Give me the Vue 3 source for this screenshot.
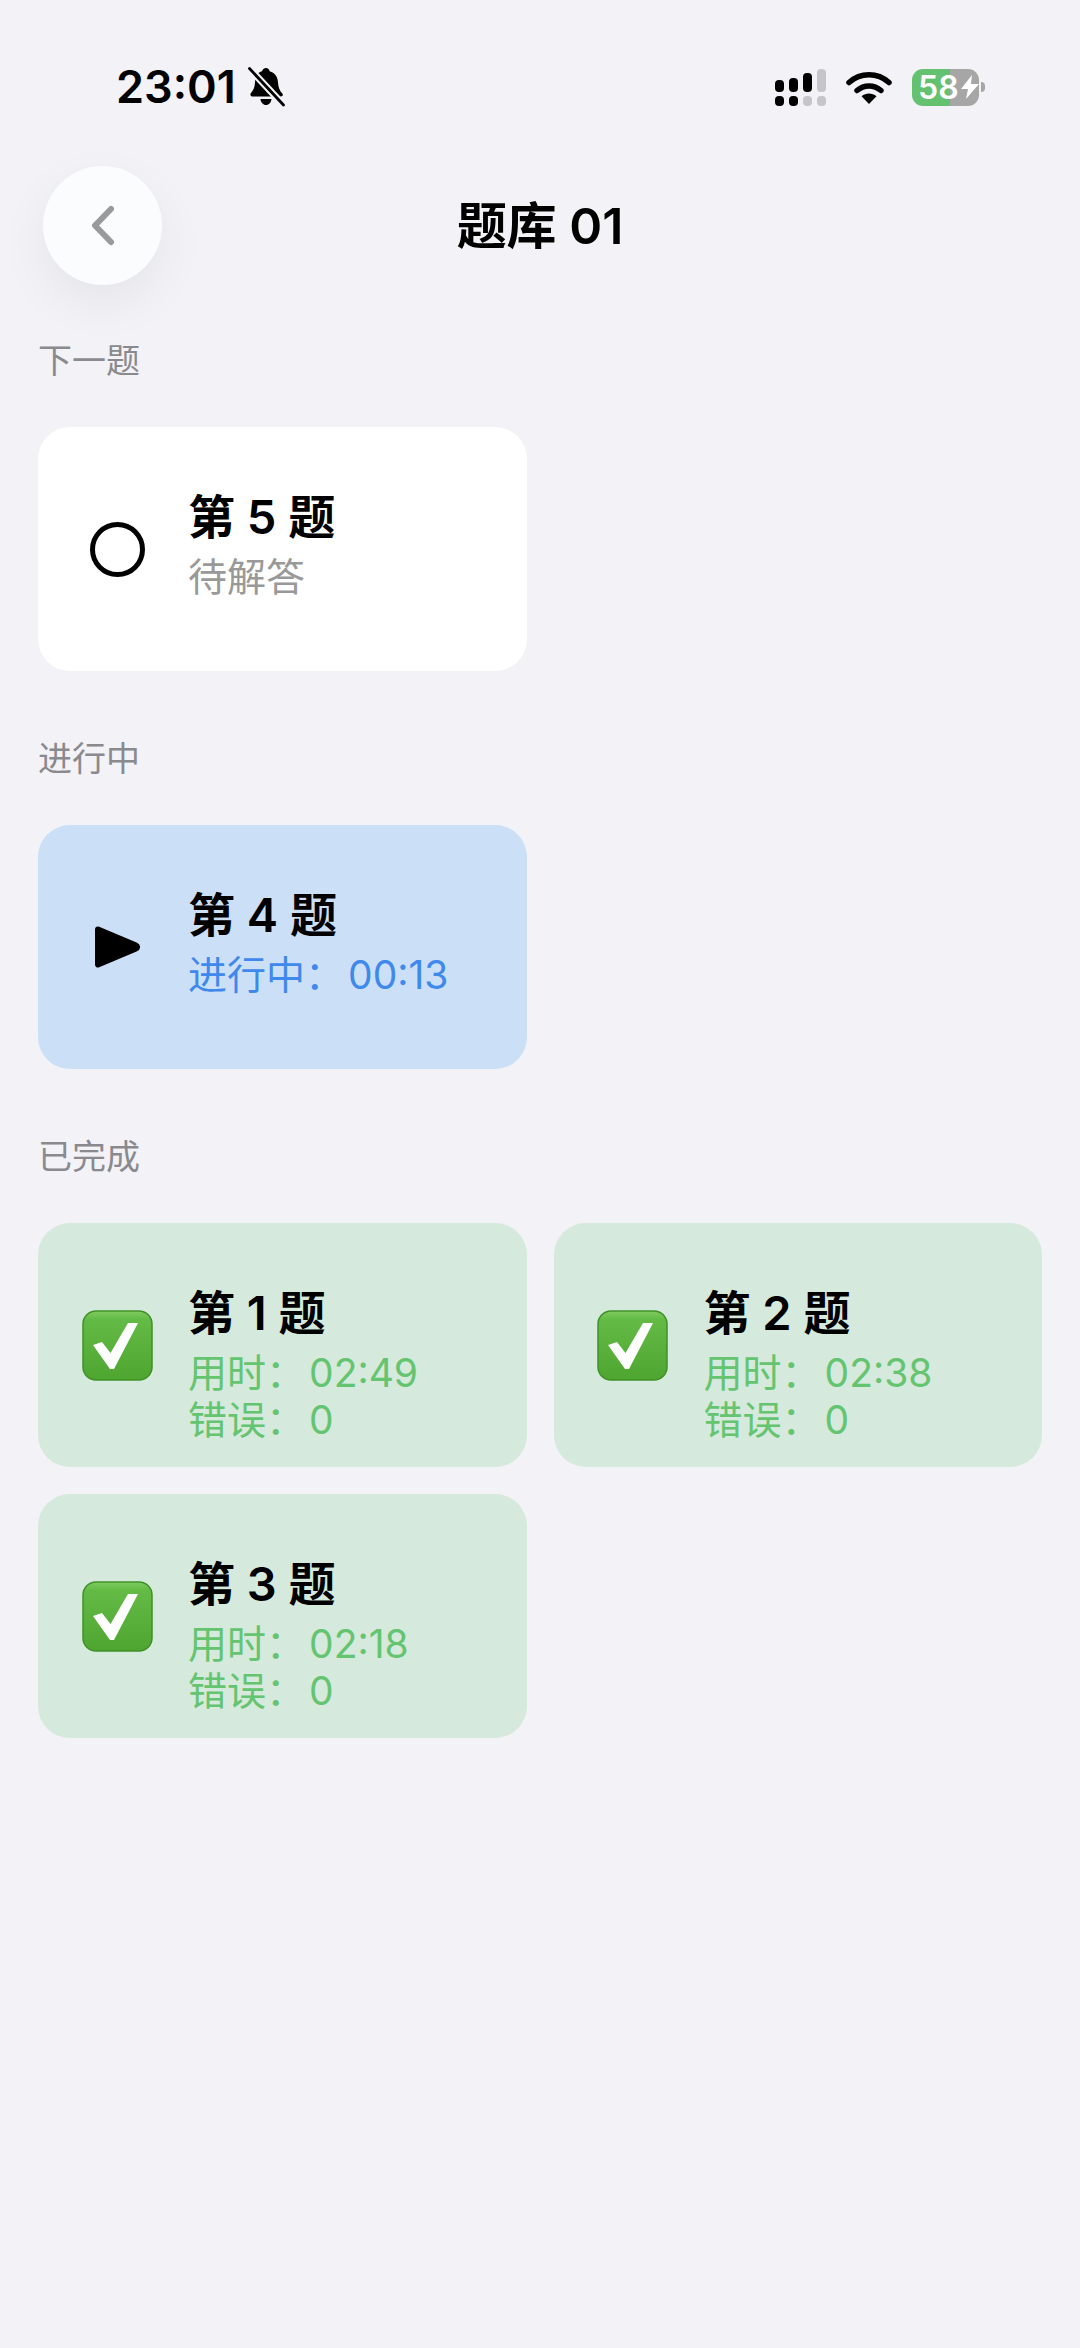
<template>
  <div class="page">
    <div class="status-bar">
      <div class="status-left">
        <span class="time">23:01</span>
        <svg class="bell" width="37" height="40" viewBox="0 0 37 40">
          <path d="M18 1c2 0 3.400 1.500 3.600 3.300 5.400 1.400 8 5.600 8.400 11 .3 5 1.400 8.200 4.300 11.200 1 1.100.5 3-1.400 3H5c-2.400 0-3.400-2-2-3.600 2.700-2.900 3.800-6 4-10.600.3-6 2.800-10 7-11C14.500 2.500 16 1 18 1z" fill="#000" />
          <path d="M12.500 32h11c-.3 3.600-2.600 6-5.500 6s-5.200-2.400-5.500-6z" fill="#000" />
          <path d="M1.500 1.500 35.500 38" stroke="#f2f2f7" stroke-width="7" fill="none" />
          <path d="M1.500 1.500 35.500 38" stroke="#000" stroke-width="2.800" stroke-linecap="round" fill="none" />
        </svg>
      </div>
      <div class="status-right">
        <div class="signal">
          <div v-for="(col, i) in signalCols" :key="i" class="signal-col">
            <span class="bar" :class="{ off: col.topOff }" :style="{ height: col.height + 'px' }"></span>
            <span class="dot" :class="{ off: col.dotOff }"></span>
          </div>
        </div>
        <svg class="wifi" width="46" height="33" viewBox="0 0 46 33">
          <path d="M3 11.500C14.500 1.200 31.500 1.200 43 11.500" stroke="#000" stroke-width="5.500" fill="none" stroke-linecap="round" />
          <path d="M11 19.500c7-6 17-6 24 0" stroke="#000" stroke-width="5.500" fill="none" stroke-linecap="round" />
          <path d="M15.500 25.200c4.600-3.700 10.400-3.700 15 0L23 33z" fill="#000" />
        </svg>
        <div class="battery">
          <div class="battery-body">
            <span class="battery-num">58</span>
            <svg class="bolt" width="18" height="24" viewBox="0 0 18 24">
              <path d="M11 0 0 14h7l-2 10L18 9h-8z" fill="#fff" />
            </svg>
          </div>
          <span class="battery-nub"></span>
        </div>
      </div>
    </div>

    <header class="header">
      <button class="back">
        <svg width="24" height="42" viewBox="0 0 24 42">
          <path d="M20 4 4 20.500 20 37" stroke="#9a9a9c" stroke-width="6" fill="none" stroke-linecap="round" stroke-linejoin="round" />
        </svg>
      </button>
      <h1 class="title">题库 01</h1>
      <span></span>
    </header>

    <section v-for="section in sections" :key="section.label" class="section">
      <div class="section-label">{{ section.label }}</div>
      <div class="grid">
        <div v-for="item in section.items" :key="item.id" class="card" :class="section.kind">
          <div class="card-icon">
            <span v-if="section.kind === 'todo'" class="ring"></span>
            <svg v-else-if="section.kind === 'doing'" width="46" height="44" viewBox="0 0 46 44">
              <path d="M4 4.500 42 20.500a1.600 1.600 0 0 1 0 3L4 39.500z" fill="#000" stroke="#000" stroke-width="6" stroke-linejoin="round" />
            </svg>
            <svg v-else width="71" height="71" viewBox="0 0 71 71">
              <defs>
                <linearGradient :id="'check' + item.id" x1="0" y1="0" x2="0" y2="1">
                  <stop offset="0" stop-color="#7fcb5f" />
                  <stop offset="0.12" stop-color="#63bb45" />
                  <stop offset="1" stop-color="#4ea52f" />
                </linearGradient>
              </defs>
              <rect x="1" y="1" width="69" height="69" rx="13" :fill="'url(#check' + item.id + ')'" stroke="#3f9128" stroke-width="1.500" />
              <path d="M11 35 20 32 28.500 43 46 13 56 13 32 59 28 59z" fill="#fff" />
            </svg>
          </div>
          <div class="card-body">
            <div class="card-title">{{ item.title }}</div>
            <div v-for="line in item.lines" :key="line.name" class="card-line">
              {{ line.name }}<template v-if="line.value !== undefined"><span class="colon">：</span>{{ line.value }}</template>
            </div>
          </div>
        </div>
      </div>
    </section>
  </div>
</template>

<script setup>
const signalCols = [
  { height: 12 },
  { height: 14 },
  { height: 19, dotOff: true },
  { height: 23, topOff: true, dotOff: true }
]

const sections = [
  {
    label: '下一题',
    kind: 'todo',
    items: [{ id: 5, title: '第 5 题', lines: [{ name: '待解答' }] }]
  },
  {
    label: '进行中',
    kind: 'doing',
    items: [{ id: 4, title: '第 4 题', lines: [{ name: '进行中', value: '00:13' }] }]
  },
  {
    label: '已完成',
    kind: 'done',
    items: [
      { id: 1, title: '第 1 题', lines: [{ name: '用时', value: '02:49' }, { name: '错误', value: '0' }] },
      { id: 2, title: '第 2 题', lines: [{ name: '用时', value: '02:38' }, { name: '错误', value: '0' }] },
      { id: 3, title: '第 3 题', lines: [{ name: '用时', value: '02:18' }, { name: '错误', value: '0' }] }
    ]
  }
]
</script>

<style>
html,
body {
  background: #f2f2f7;
}
</style>

<style scoped>
.page {
  min-height: 2348px;
  padding: 0 38px;
  box-sizing: border-box;
  background: #f2f2f7;
  font-family: Inter, "Noto Sans CJK SC", sans-serif;
  color: #000;
}

.status-bar {
  display: flex;
  justify-content: space-between;
  align-items: center;
  height: 166px;
  padding: 8px 57px 0 78px;
  box-sizing: border-box;
}

.status-left {
  display: flex;
  align-items: center;
  gap: 12px;
}

.time {
  font-size: 45px;
  font-weight: 600;
  line-height: 56px;
}

.status-right {
  display: flex;
  align-items: center;
  gap: 20px;
}

.signal {
  display: flex;
  gap: 5px;
}

.signal-col {
  display: flex;
  flex-direction: column;
  justify-content: flex-end;
  gap: 4px;
  width: 9px;
  height: 37px;
}

.bar,
.dot {
  display: block;
  width: 9px;
  border-radius: 4px;
  background: #000;
}

.dot {
  height: 10px;
}

.bar.off,
.dot.off {
  background: #c6c6c9;
}

.battery {
  display: flex;
  align-items: center;
  gap: 2px;
}

.battery-body {
  display: flex;
  align-items: center;
  width: 67px;
  height: 37px;
  padding-left: 6px;
  box-sizing: border-box;
  border-radius: 11px;
  background: linear-gradient(90deg, #63c16f 57%, #a6a6a6 57%);
}

.battery-num {
  font-size: 32px;
  font-weight: 600;
  line-height: 37px;
  color: #fff;
}

.bolt {
  margin-left: 2px;
}

.battery-nub {
  width: 4px;
  height: 10px;
  border-radius: 0 4px 4px 0;
  background: #a6a6a6;
}

.header {
  display: grid;
  grid-template-columns: 1fr auto 1fr;
  align-items: center;
  height: 119px;
  margin-bottom: 56px;
}

.back {
  display: flex;
  align-items: center;
  justify-content: center;
  width: 119px;
  height: 119px;
  margin-left: 5px;
  padding: 0;
  border: 0;
  border-radius: 50%;
  background: #fbfcfd;
  box-shadow: 0 18px 50px rgba(0, 0, 0, 0.06);
}

.title {
  margin: 0;
  font-size: 50px;
  font-weight: 600;
  line-height: 60px;
}

.section + .section {
  margin-top: 68px;
}

.section-label {
  margin-bottom: 46px;
  font-size: 34px;
  line-height: 40px;
  color: #8a8a8e;
}

.grid {
  display: grid;
  grid-template-columns: 1fr 1fr;
  gap: 27px;
}

.card {
  display: flex;
  height: 244px;
  padding-left: 29px;
  border-radius: 32px;
  box-sizing: border-box;
}

.card.todo {
  background: #fff;
}

.card.doing {
  background: #cbdff7;
}

.card.done {
  background: #d5e9dc;
}

.card-icon {
  display: flex;
  align-items: center;
  justify-content: center;
  width: 100px;
  height: 244px;
  flex: none;
}

.ring {
  display: block;
  width: 55px;
  height: 55px;
  border: 5px solid #000;
  border-radius: 50%;
  box-sizing: border-box;
}

.card-body {
  margin-left: 21px;
  padding-top: 60px;
}

.card-title {
  margin-bottom: 6px;
  font-size: 47px;
  font-weight: 600;
  line-height: 60px;
}

.card-line {
  font-size: 39px;
  line-height: 47px;
  height: 47px;
}

.todo .card-line {
  color: #999;
}

.doing .card-line {
  color: #3f88ec;
}

.done .card-line {
  color: #64c46f;
}

.colon {
  margin-right: 4px;
  line-height: 0;
  vertical-align: 0;
}
</style>
